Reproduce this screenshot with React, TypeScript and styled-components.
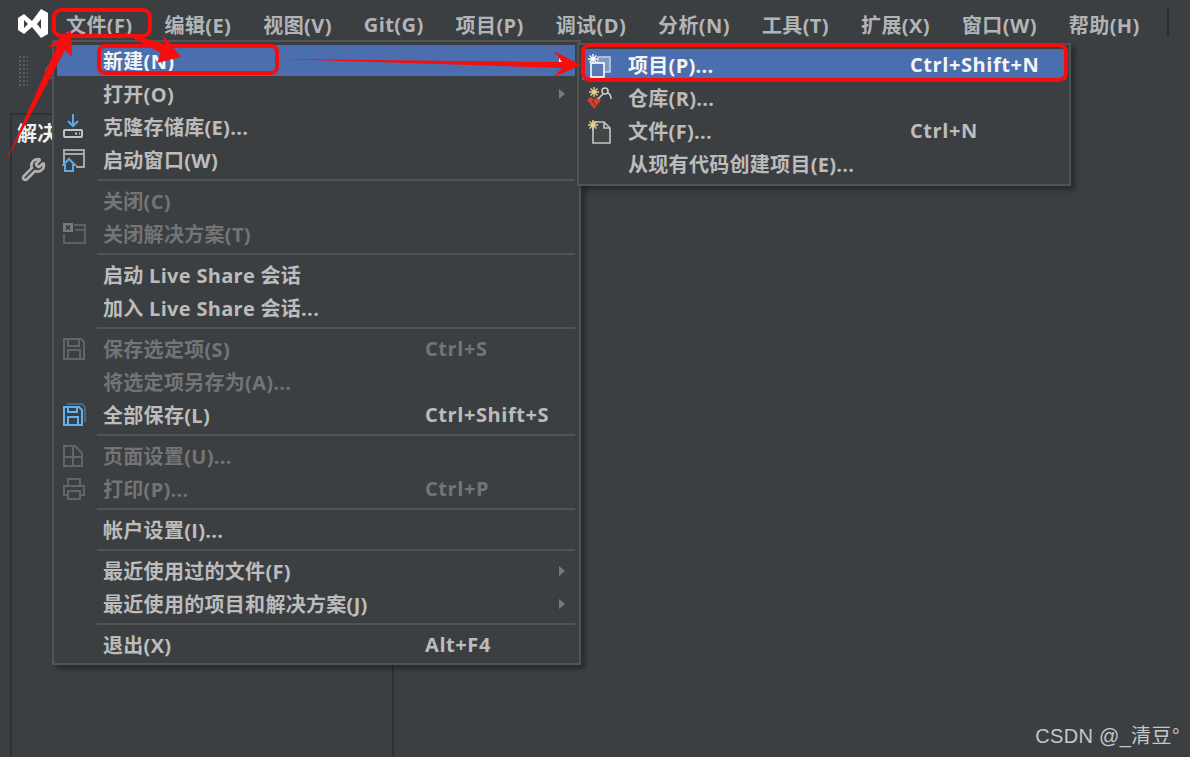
import React from "react"
import styled, { createGlobalStyle } from "styled-components"
import { Wrench } from "lucide-react"

const GlobalStyle = createGlobalStyle`
  html, body {
    margin: 0;
    padding: 0;
    background: #3b3e41;
  }
  * {
    box-sizing: border-box;
  }
`

const Page = styled.div`
  position: relative;
  width: 1190px;
  height: 757px;
  overflow: hidden;
  display: flex;
  flex-direction: column;
  background: #3c3f42;
  color: #bcbcbc;
  font-family: "Open Sans", "Noto Sans CJK SC", sans-serif;
  font-size: 20px;
  font-weight: 700;
  letter-spacing: 0.3px;
`

const MenuBar = styled.div`
  display: flex;
  align-items: center;
  height: 43px;
  padding-left: 18px;
  flex: none;
`

const LogoBox = styled.div`
  width: 33px;
  height: 30px;
  margin-right: -1px;
  margin-top: 4px;
  flex: none;
`

const BarItem = styled.div`
  padding: 0 16px;
  margin-top: 5px;
  white-space: nowrap;
  letter-spacing: 0.4px;
  color: #b2b5b8;
`

const BarDivider = styled.div`
  width: 2px;
  height: 30px;
  margin-left: 11px;
  margin-top: 1px;
  background: #2b2b2b;
`

const ToolBar = styled.div`
  display: flex;
  align-items: center;
  gap: 10px;
  height: 70px;
  padding: 0 0 14px 18px;
  flex: none;
`

const Grip = styled.div`
  width: 10px;
  height: 32px;
  background-image: radial-gradient(#5a5d60 1px, transparent 1.2px);
  background-size: 4px 4px;
`

const RoundButton = styled.div`
  width: 15px;
  height: 15px;
  margin-left: 7px;
  border: 2px solid #5c5f62;
  border-radius: 50%;
`

const Workspace = styled.div`
  flex: 1;
  display: flex;
  padding-left: 10px;
`

const SidePanel = styled.div`
  width: 384px;
  border-left: 2px solid #2f3133;
  border-right: 2px solid #2f3133;
  border-top: 2px solid #2f3133;
  padding: 6px 0 0 5px;
`

const PanelTitle = styled.div`
  color: #f2f2f2;
  line-height: 26px;
`

const PanelTool = styled.div`
  display: flex;
  margin: 10px 0 0 4px;
  color: #b0b0b0;
`

const Dropdown = styled.div`
  position: absolute;
  left: 52px;
  top: 40px;
  width: 529px;
  display: flex;
  flex-direction: column;
  padding: 2px 4px 2px 3px;
  background: #3c3f41;
  border: 2px solid #515355;
  box-shadow: 4px 4px 5px rgba(0, 0, 0, 0.35);
`

const SubMenu = styled(Dropdown)`
  left: 577px;
  top: 43px;
  width: 494px;
  padding: 3px 3px 4px 3px;
`

const Row = styled.div<{ $active?: boolean; $disabled?: boolean; $label: number }>`
  display: grid;
  grid-template-columns: 46px ${(p) => p.$label}px 1fr;
  align-items: center;
  height: 31px;
  margin: 1px 0;
  white-space: nowrap;
  background: ${(p) => (p.$active ? "#4b6eaf" : "transparent")};
  color: ${(p) => (p.$active ? "#f4f4f4" : p.$disabled ? "#727476" : "#bcbcbc")};
`

const IconCell = styled.div`
  display: flex;
  padding-left: 5px;
`

const Shortcut = styled.div`
  grid-column: 3;
  grid-row: 1;
  letter-spacing: 0.58px;
`

const Chevron = styled.div<{ $active?: boolean }>`
  grid-column: 3;
  grid-row: 1;
  justify-self: end;
  margin-right: 10px;
  width: 0;
  height: 0;
  border-top: 5px solid transparent;
  border-bottom: 5px solid transparent;
  border-left: 6px solid ${(p) => (p.$active ? "#e8e8e8" : "#77797b")};
`

const Separator = styled.div`
  flex: none;
  height: 2px;
  margin: 3px 0 3px 40px;
  background: #515355;
`

const Watermark = styled.div`
  position: absolute;
  right: 10px;
  bottom: 6px;
  font-family: "Liberation Sans", "Noto Sans CJK SC", sans-serif;
  font-weight: 400;
  font-size: 20px;
  line-height: 30px;
  letter-spacing: 0.3px;
  color: #c4c6c8;
`

const Annotations = styled.svg`
  position: absolute;
  left: 0;
  top: 0;
  pointer-events: none;
`

const Logo = () => (
  <svg width="33" height="30" viewBox="0 0 33 30">
    <path
      fill="#fff"
      fillRule="evenodd"
      d="M0 9l6-4 8 7L23 0l7 4v21l-7 4-9-11-8 7-6-4zM6 11v8l4-4zM19 15l4 5v-10z"
    />
  </svg>
)

const Spark = ({ x, y, color }: { x: number; y: number; color: string }) => (
  <path
    transform={`translate(${x} ${y})`}
    stroke={color}
    strokeWidth="1.4"
    fill="none"
    d="M0-5V5M-5 0H5M-3.5-3.5L3.5 3.5M-3.5 3.5L3.5-3.5"
  />
)

const IconClone = () => (
  <svg width="24" height="28" viewBox="0 0 24 28">
    <path d="M11 1v11M6 8l5 5 5-5" stroke="#5aa9e6" strokeWidth="2" fill="none" />
    <rect x="2" y="17" width="18" height="7" rx="1" stroke="#c4c4c4" strokeWidth="2" fill="none" />
    <path d="M13 20.5h2M17 20.5h1" stroke="#c4c4c4" strokeWidth="2" />
  </svg>
)

const IconStart = () => (
  <svg width="24" height="26" viewBox="0 0 24 26">
    <path d="M2 16V3h20v17H14M2 7h20" stroke="#a8a8a8" strokeWidth="2" fill="none" />
    <path d="M1 18l6-6 6 6h-2v6H3v-6z" stroke="#5aa9e6" strokeWidth="2" fill="#3c3f41" />
  </svg>
)

const IconCloseSolution = () => (
  <svg width="24" height="24" viewBox="0 0 24 24">
    <path d="M12 3h11v18H2v-9M13 8h10" stroke="#696b6d" strokeWidth="1.6" fill="none" />
    <rect x="1" y="1" width="10" height="9" fill="#77797b" />
    <path d="M4 3.5l4 4M8 3.5l-4 4" stroke="#2f3133" strokeWidth="1.4" />
  </svg>
)

const IconSave = () => (
  <svg width="24" height="24" viewBox="0 0 24 24">
    <path
      d="M2 2h17l3 3v17H2zM6 2v7h11V2M6 22v-9h12v9"
      stroke="#626466"
      strokeWidth="2"
      fill="none"
    />
  </svg>
)

const IconSaveAll = () => (
  <svg width="24" height="24" viewBox="0 0 24 24">
    <path
      d="M2 4h15l3 3v15H2zM6 4v5h9V4M6 22v-8h10v8"
      stroke="#63b0ee"
      strokeWidth="2"
      fill="none"
    />
    <path d="M5 1h15l3 3v15" stroke="#3f79a8" strokeWidth="1.5" fill="none" />
  </svg>
)

const IconPage = () => (
  <svg width="22" height="24" viewBox="0 0 22 24">
    <path d="M2 2h11l7 7v13H2zM11 2v20M2 13h18" stroke="#626466" strokeWidth="2" fill="none" />
  </svg>
)

const IconPrint = () => (
  <svg width="24" height="24" viewBox="0 0 24 24">
    <path
      d="M6 8V2h12v6M6 18H2V9h20v9h-4M6 14h12v8H6z"
      stroke="#626466"
      strokeWidth="2"
      fill="none"
    />
  </svg>
)

const IconProject = () => (
  <svg width="26" height="26" viewBox="0 0 26 26">
    <rect x="11" y="5" width="12" height="15" stroke="#c5d2e8" strokeWidth="1.5" fill="#8098c2" />
    <rect x="4" y="11" width="13" height="14" stroke="#fff" strokeWidth="1.6" fill="#5a7ab3" />
    <Spark x={6} y={7} color="#fff" />
  </svg>
)

const IconRepo = () => (
  <svg width="26" height="26" viewBox="0 0 26 26">
    <Spark x={7} y={7} color="#e8cf8c" />
    <path d="M0 15l3.5-3 3.5 2 3.5-2 3.5 3-7 9z" fill="#d2402f" />
    <path d="M7 14l-1.5 3 3 2-1.5 2" stroke="#3c3f41" strokeWidth="1" fill="none" />
    <circle cx="18" cy="6" r="3" stroke="#d0d0d0" strokeWidth="1.5" fill="none" />
    <path d="M11 14l5-5M24 14c0-3-1-5-3-6" stroke="#d0d0d0" strokeWidth="1.5" fill="none" />
  </svg>
)

const IconFile = () => (
  <svg width="26" height="28" viewBox="0 0 26 28">
    <path d="M6 5h11l6 6v15H6z" stroke="#c4c4c4" strokeWidth="1.6" fill="#434649" />
    <path d="M17 5v6h6" stroke="#c4c4c4" strokeWidth="1.6" fill="none" />
    <Spark x={6} y={8} color="#e8cf8c" />
  </svg>
)

type Entry =
  | "sep"
  | {
      label: string
      icon?: React.ReactNode
      shortcut?: string
      arrow?: boolean
      active?: boolean
      disabled?: boolean
    }

const barItems = ["文件(F)", "编辑(E)", "视图(V)", "Git(G)", "项目(P)", "调试(D)", "分析(N)", "工具(T)", "扩展(X)", "窗口(W)", "帮助(H)"]

const fileMenu: Entry[] = [
  { label: "新建(N)", arrow: true, active: true },
  { label: "打开(O)", arrow: true },
  { label: "克隆存储库(E)...", icon: <IconClone /> },
  { label: "启动窗口(W)", icon: <IconStart /> },
  "sep",
  { label: "关闭(C)", disabled: true },
  { label: "关闭解决方案(T)", icon: <IconCloseSolution />, disabled: true },
  "sep",
  { label: "启动 Live Share 会话" },
  { label: "加入 Live Share 会话..." },
  "sep",
  { label: "保存选定项(S)", icon: <IconSave />, shortcut: "Ctrl+S", disabled: true },
  { label: "将选定项另存为(A)...", disabled: true },
  { label: "全部保存(L)", icon: <IconSaveAll />, shortcut: "Ctrl+Shift+S" },
  "sep",
  { label: "页面设置(U)...", icon: <IconPage />, disabled: true },
  { label: "打印(P)...", icon: <IconPrint />, shortcut: "Ctrl+P", disabled: true },
  "sep",
  { label: "帐户设置(I)..." },
  "sep",
  { label: "最近使用过的文件(F)", arrow: true },
  { label: "最近使用的项目和解决方案(J)", arrow: true },
  "sep",
  { label: "退出(X)", shortcut: "Alt+F4" },
]

const newMenu: Entry[] = [
  { label: "项目(P)...", icon: <IconProject />, shortcut: "Ctrl+Shift+N", active: true },
  { label: "仓库(R)...", icon: <IconRepo /> },
  { label: "文件(F)...", icon: <IconFile />, shortcut: "Ctrl+N" },
  { label: "从现有代码创建项目(E)..." },
]

const renderEntries = (entries: Entry[], labelWidth: number) =>
  entries.map((entry, i) =>
    entry === "sep" ? (
      <Separator key={i} />
    ) : (
      <Row key={i} $active={entry.active} $disabled={entry.disabled} $label={labelWidth}>
        <IconCell>{entry.icon}</IconCell>
        <div>{entry.label}</div>
        {entry.shortcut && <Shortcut>{entry.shortcut}</Shortcut>}
        {entry.arrow && <Chevron $active={entry.active} />}
      </Row>
    )
  )

const App: React.FC = () => {
  return (
    <Page>
      <GlobalStyle />
      <MenuBar>
        <LogoBox>
          <Logo />
        </LogoBox>
        {barItems.map((item) => (
          <BarItem key={item}>{item}</BarItem>
        ))}
        <BarDivider />
      </MenuBar>
      <ToolBar>
        <Grip />
        <RoundButton />
      </ToolBar>
      <Workspace>
        <SidePanel>
          <PanelTitle>解决</PanelTitle>
          <PanelTool>
            <Wrench size={25} strokeWidth={2.6} />
          </PanelTool>
        </SidePanel>
      </Workspace>

      <Dropdown>{renderEntries(fileMenu, 322)}</Dropdown>
      <SubMenu>{renderEntries(newMenu, 282)}</SubMenu>

      <Annotations width="1190" height="757" viewBox="0 0 1190 757">
        <g fill="none" stroke="#f60d0d" strokeWidth="4">
          <rect x="54" y="10" width="96" height="26" rx="7" />
          <rect x="99" y="46" width="178" height="27" rx="6" />
          <rect x="583" y="45" width="483" height="35" rx="7" />
        </g>
        <g fill="#f60d0d">
          <polygon points="5,163 57,46 48,47 71,30 72,57 65,50" />
          <polygon points="122,32 165,44 163,35 181,57 157,63 161,53" />
          <polygon points="280,59 562,62 554,51 581,65 554,77 562,68" />
        </g>
      </Annotations>

      <Watermark>CSDN @_清豆°</Watermark>
    </Page>
  )
}

export default App
